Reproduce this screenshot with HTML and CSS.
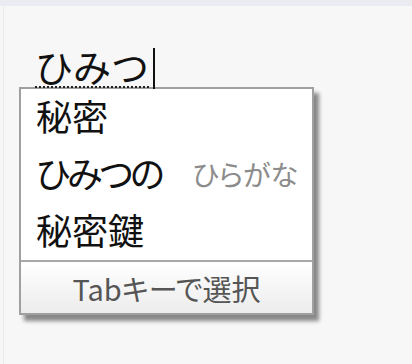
FILE: index.html
```html
<!DOCTYPE html>
<html lang="ja">
<head>
<meta charset="utf-8">
<link rel="stylesheet" href="styles.css">
</head>
<body>
<div class="topbar"></div>
<div class="editor">
  <div class="composition"><span class="comp">ひみつ</span><span class="caret"></span></div>
  <div class="popup">
    <div class="row"><span class="cand">秘密</span></div>
    <div class="row"><span class="cand kana">ひみつの</span><span class="hint">ひらがな</span></div>
    <div class="row"><span class="cand">秘密鍵</span></div>
    <div class="footer">Tabキーで選択</div>
  </div>
</div>
</body>
</html>
```
FILE: styles.css
```css
html, body {
  margin: 0;
  padding: 0;
}
body {
  width: 412px;
  height: 364px;
  background: #f7f7f7;
  font-family: "Noto Sans CJK JP", "Noto Sans", sans-serif;
  overflow: hidden;
}
.topbar {
  height: 6px;
  background: #ebebf2;
}
.editor {
  height: 358px;
  margin-left: 3px;
  border-left: 1px solid #ececec;
  padding-left: 15px;
  box-sizing: border-box;
}
.composition {
  display: flex;
  align-items: flex-start;
  padding-left: 16px;
  padding-top: 40px;
  height: 81px;
  box-sizing: border-box;
}
.comp {
  font-size: 38px;
  line-height: 40px;
  color: #111;
  letter-spacing: 0;
  border-bottom: 2px dotted #222;
  height: 40px;
}
.caret {
  width: 2px;
  height: 41px;
  margin-left: 4px;
  margin-top: 2px;
  background: #111;
}
.popup {
  width: 295px;
  border: 2px solid #a0a0a0;
  background: #fff;
  box-sizing: border-box;
  box-shadow: 5px 6px 4px rgba(0, 0, 0, 0.45);
}
.row {
  height: 57px;
  display: flex;
  align-items: center;
  padding-left: 15px;
  padding-right: 14px;
  padding-bottom: 6px;
  box-sizing: border-box;
}
.cand {
  font-size: 36px;
  color: #111;
  font-feature-settings: "palt";
  line-height: 40px;
}
.cand.kana {
  letter-spacing: -3px;
}
.hint {
  margin-left: auto;
  font-size: 28px;
  color: #8c8c8c;
  font-feature-settings: "palt";
  line-height: 32px;
  padding-top: 4px;
}
.footer {
  border-top: 2px solid #a8a8a8;
  height: 51px;
  display: flex;
  align-items: center;
  justify-content: center;
  font-size: 29px;
  color: #555;
  background: linear-gradient(#ffffff, #ececec);
  font-feature-settings: "palt";
}
```
